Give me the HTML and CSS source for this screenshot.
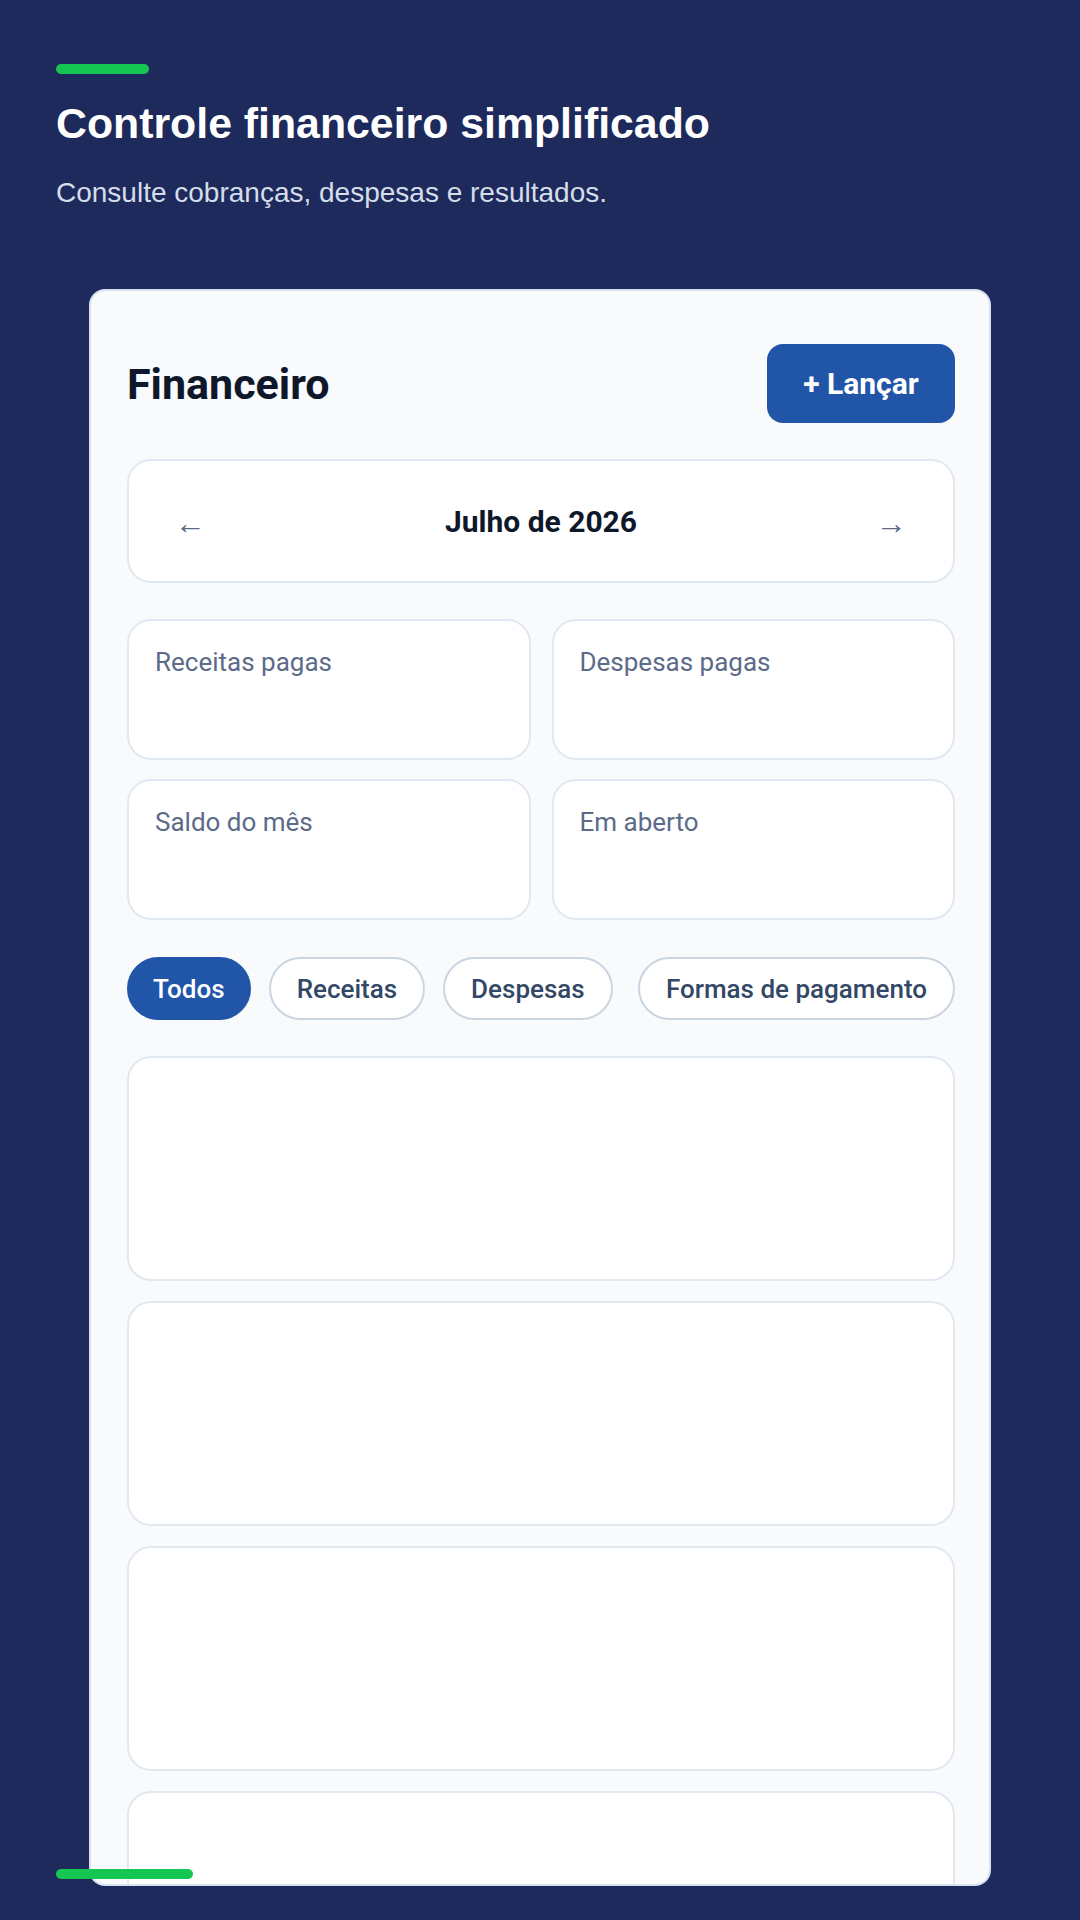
FILE: index.html
```html
<!DOCTYPE html>
<html lang="pt-BR">
<head>
<meta charset="utf-8">
<title>Financeiro</title>
<link rel="stylesheet" href="styles.css">
</head>
<body>
<div class="page">
  <div class="accent"></div>
  <h1 class="hero-title">Controle financeiro simplificado</h1>
  <p class="hero-sub">Consulte cobranças, despesas e resultados.</p>

  <main class="app">
    <header class="app-head">
      <h2 class="app-title">Financeiro</h2>
      <button class="btn-primary">+ Lançar</button>
    </header>

    <nav class="month-nav">
      <span class="arrow">←</span>
      <span class="month">Julho de 2026</span>
      <span class="arrow">→</span>
    </nav>

    <section class="stats">
      <div class="stat"><div class="stat-label">Receitas pagas</div></div>
      <div class="stat"><div class="stat-label">Despesas pagas</div></div>
      <div class="stat"><div class="stat-label">Saldo do mês</div></div>
      <div class="stat"><div class="stat-label">Em aberto</div></div>
    </section>

    <div class="chips">
      <span class="chip active">Todos</span>
      <span class="chip">Receitas</span>
      <span class="chip">Despesas</span>
      <span class="chip last">Formas de pagamento</span>
    </div>

    <section class="list">
      <div class="item"></div>
      <div class="item"></div>
      <div class="item"></div>
      <div class="item"></div>
    </section>
  </main>

  <div class="accent-bottom"></div>
</div>
</body>
</html>
```

FILE: styles.css
```css
* { box-sizing: border-box; }

html, body {
  margin: 0;
  padding: 0;
  background: #1d2a5b;
}

body {
  width: 1080px;
  height: 1920px;
  overflow: hidden;
  font-family: Roboto, "Liberation Sans", Arial, sans-serif;
}

.page {
  position: relative;
  height: 1920px;
  padding: 64px 56px 34px;
  display: flex;
  flex-direction: column;
}

.accent {
  width: 93px;
  height: 10px;
  border-radius: 5px;
  background: #16c653;
  flex-shrink: 0;
}

.hero-title {
  margin: 25px 0 0;
  font-family: "Liberation Sans", Arial, sans-serif;
  font-weight: 700;
  font-size: 42.8px;
  line-height: 48px;
  color: #ffffff;
}

.hero-sub {
  margin: 30px 0 0;
  font-family: "Liberation Sans", Arial, sans-serif;
  font-size: 28px;
  line-height: 32px;
  color: #d5ddeb;
}

.app {
  flex: 1;
  min-height: 0;
  overflow: hidden;
  width: 902px;
  align-self: center;
  margin-top: 80px;
  padding: 53px 34px 0 36px;
  background: #f8fafc;
  border: 2px solid #d8e1ee;
  border-radius: 16px;
  display: flex;
  flex-direction: column;
}

.app-head {
  display: flex;
  justify-content: space-between;
  align-items: center;
  height: 79px;
  flex-shrink: 0;
}

.app-title {
  margin: 0;
  font-size: 43px;
  font-weight: 700;
  color: #0f172a;
}

.btn-primary {
  width: 188px;
  height: 79px;
  border: none;
  border-radius: 16px;
  background: #2155a7;
  color: #ffffff;
  font-family: Roboto, "Liberation Sans", Arial, sans-serif;
  font-size: 30px;
  font-weight: 700;
  padding: 0;
}

.month-nav {
  margin-top: 36px;
  height: 124px;
  flex-shrink: 0;
  background: #ffffff;
  border: 2px solid #e2e8f0;
  border-radius: 24px;
  display: flex;
  align-items: center;
  justify-content: space-between;
  padding: 0 46px;
}

.month {
  font-size: 30px;
  font-weight: 700;
  color: #0f172a;
}

.arrow {
  font-size: 31px;
  line-height: 1;
  color: #5b6a86;
  padding-top: 4px;
}

.stats {
  margin-top: 36px;
  display: grid;
  grid-template-columns: 1fr 1fr;
  gap: 19px 21px;
  flex-shrink: 0;
}

.stat {
  height: 141px;
  background: #ffffff;
  border: 2px solid #e2e8f0;
  border-radius: 24px;
  padding: 26px;
}

.stat-label {
  font-size: 26px;
  color: #5b6b88;
}

.chips {
  margin-top: 37px;
  display: flex;
  gap: 18px;
  flex-shrink: 0;
}

.chip {
  height: 63px;
  padding: 0 26px;
  display: flex;
  align-items: center;
  border: 2px solid #cbd5e1;
  border-radius: 999px;
  background: #ffffff;
  color: #334766;
  font-size: 26px;
  font-weight: 500;
}

.chip.active {
  padding: 0 24px;
  background: #2155a7;
  border-color: #2155a7;
  color: #ffffff;
}

.chip.last { margin-left: auto; }

.list {
  margin-top: 36px;
  display: flex;
  flex-direction: column;
  gap: 20px;
}

.item {
  height: 225px;
  flex-shrink: 0;
  background: #ffffff;
  border: 2px solid #e2e8f0;
  border-radius: 24px;
}

.accent-bottom {
  position: absolute;
  left: 56px;
  bottom: 41px;
  width: 137px;
  height: 10px;
  border-radius: 5px;
  background: #16c653;
}
```
